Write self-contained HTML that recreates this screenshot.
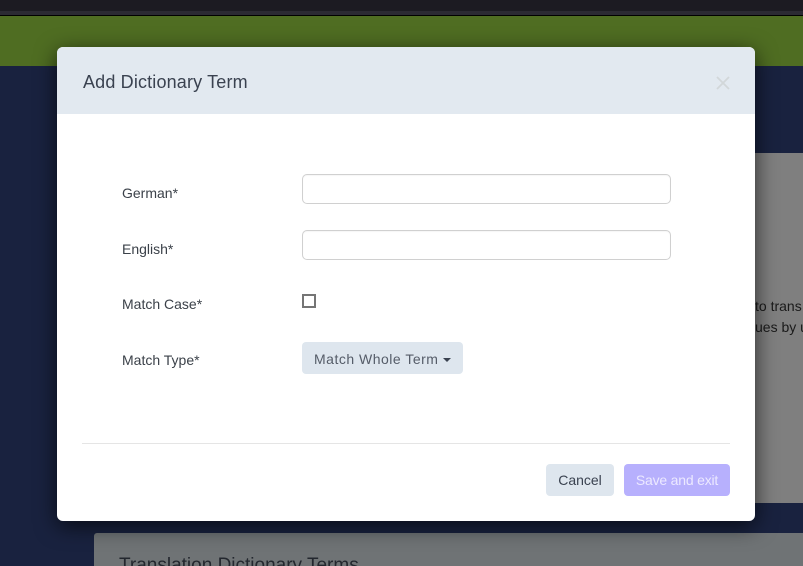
<!DOCTYPE html>
<html>
<head>
<meta charset="utf-8">
<style>
html,body{margin:0;padding:0;width:803px;height:566px;overflow:hidden;background:#19223f;font-family:"Liberation Sans",sans-serif;}
.abs{position:absolute;}
#page{position:relative;width:803px;height:566px;overflow:hidden;}
.lbl{position:absolute;left:65px;font-size:14px;line-height:20px;color:#3b4149;white-space:nowrap;}
.inp{position:absolute;left:245px;width:367px;height:28px;background:#fff;border:1px solid #d0d0d0;border-radius:5px;box-shadow:inset 0 1px 1px rgba(0,0,0,.04);}
.btn{position:absolute;border-radius:4px;font-size:14px;text-align:center;white-space:nowrap;}
</style>
</head>
<body>
<div id="page">
<div class="abs" style="left:0;top:0;width:803px;height:11px;background:#1c1b22"></div>
<div class="abs" style="left:0;top:11px;width:803px;height:4px;background:#2b2a33"></div>
<div class="abs" style="left:0;top:15px;width:803px;height:1px;background:#000"></div>
<div class="abs" style="left:0;top:16px;width:803px;height:50px;background:#4f6d22"></div>
<div class="abs" style="left:94px;top:153px;width:720px;height:350px;background:#7f7f7f;border-radius:3px"></div>
<div class="abs" style="left:755px;top:295px;font-size:14px;line-height:22px;color:#1a1a1a;white-space:nowrap">to trans</div>
<div class="abs" style="left:755px;top:316px;font-size:14px;line-height:22px;color:#1a1a1a;white-space:nowrap">ues by u</div>
<div class="abs" style="left:94px;top:533px;width:720px;height:40px;background:#6f7375;border-radius:3px"></div>
<div class="abs" style="left:119px;top:555px;font-size:19px;line-height:22px;color:#23272e;white-space:nowrap">Translation Dictionary Terms</div>

<div class="abs" style="left:57px;top:47px;width:698px;height:474px;border-radius:6px;box-shadow:0 5px 22px rgba(0,0,0,.68)"></div>
<div class="abs" style="left:57px;top:47px;width:698px;height:474px;background:#fff;border-radius:6px;overflow:hidden">
  <div class="abs" style="left:0;top:0;width:698px;height:67px;background:#e2e9f0"></div>
  <div class="abs" style="left:26px;top:24px;font-size:18px;line-height:22px;letter-spacing:.16px;color:#3a4250;white-space:nowrap">Add Dictionary Term</div>
  <svg class="abs" style="left:659px;top:29px" width="14" height="14" viewBox="0 0 14 14"><path d="M1 1L13 13M13 1L1 13" stroke="#d2d7d9" stroke-width="1.8" fill="none"/></svg>

  <div class="lbl" style="top:136px">German*</div>
  <div class="inp" style="top:127px"></div>
  <div class="lbl" style="top:192px">English*</div>
  <div class="inp" style="top:183px"></div>
  <div class="lbl" style="top:247px">Match Case*</div>
  <div class="abs" style="left:245px;top:247px;width:10px;height:10px;border:2px solid #757575;background:#fff"></div>
  <div class="lbl" style="top:303px">Match Type*</div>
  <div class="btn" style="left:245px;top:295px;width:161px;height:32px;line-height:34px;background:#dee6ee;color:#555c68;text-align:left">
    <span class="abs" style="left:12px;top:0;letter-spacing:.5px">Match Whole Term</span>
    <span class="abs" style="left:141px;top:16px;width:0;height:0;border-left:4px solid transparent;border-right:4px solid transparent;border-top:4px solid #3a4250"></span>
  </div>

  <div class="abs" style="left:25px;top:396px;width:648px;height:1px;background:#e5e5e5"></div>
  <div class="btn" style="left:489px;top:417px;width:68px;height:32px;line-height:32px;background:#dee6ee;color:#3a4250">Cancel</div>
  <div class="btn" style="left:567px;top:417px;width:106px;height:32px;line-height:33px;background:#b7b0fd;color:#ece9ff;letter-spacing:-.2px">Save and exit</div>
</div>
</div>
</body>
</html>
